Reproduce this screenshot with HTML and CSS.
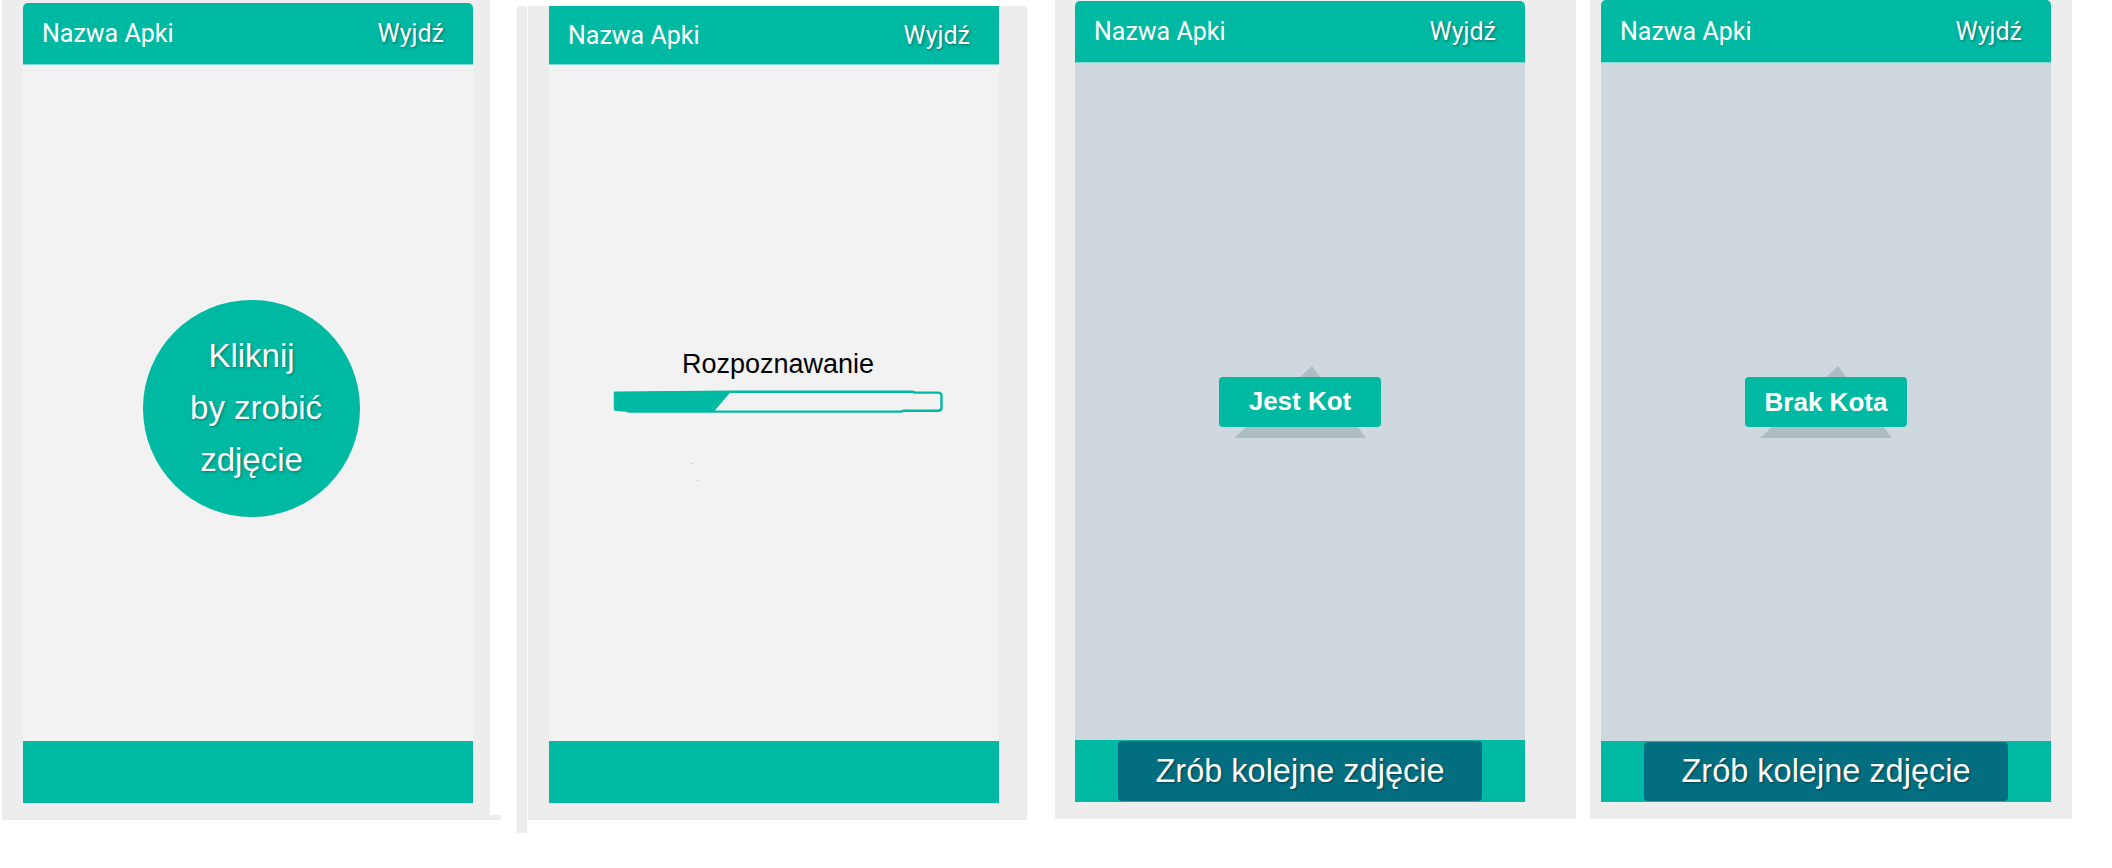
FILE: index.html
```html
<!DOCTYPE html>
<html lang="pl">
<head>
<meta charset="utf-8">
<title>Nazwa Apki – ekrany</title>
<link rel="stylesheet" href="styles.css">
</head>
<body>
<div class="stage">

  <section class="frame f1">
    <div class="phone">
      <header class="bar"><span class="title">Nazwa Apki</span><span class="exit">Wyjdź</span></header>
      <main class="screen">
        <button class="shot" type="button">
          <span class="shot-line">Kliknij</span>
          <span class="shot-line">&nbsp;by zrobić</span>
          <span class="shot-line">zdjęcie</span>
        </button>
      </main>
      <footer class="foot"></footer>
    </div>
  </section>

  <div class="strip"></div>

  <section class="frame f2">
    <div class="phone">
      <header class="bar bar--square"><span class="title">Nazwa Apki</span><span class="exit">Wyjdź</span></header>
      <main class="screen">
        <div class="progress">
          <div class="progress-label">Rozpoznawanie</div>
          <svg class="progress-bar" width="330" height="23" viewBox="0 0 330 23">
            <path d="M1 3 L33 2.5 L36 1.5 L118 1.5 L101 21.5 L18 21.5 L15 20.5 L1 20.5 Z" fill="#00b9a3"/>
            <path d="M2 2.8 L120 1.8 L300 1.8 L302 2.6 L325 2.6 Q328.5 2.6 328.5 6 L328.5 17.5 Q328.5 20.8 325 20.8 L290 20.8 L288 21.6 L16 21.6 L14 20.6 Q2 20.6 2 18 Z" fill="none" stroke="#00b9a3" stroke-width="2.4" stroke-linejoin="round"/>
          </svg>
        </div>
        <span class="dot dot-a"></span>
        <span class="dot dot-b"></span>
      </main>
      <footer class="foot"></footer>
    </div>
  </section>

  <section class="frame f3">
    <div class="phone">
      <header class="bar"><span class="title">Nazwa Apki</span><span class="exit">Wyjdź</span></header>
      <main class="screen screen--result">
        <div class="verdict">
          <svg class="verdict-tri" width="132" height="72" viewBox="0 0 132 72"><polygon points="78,0 132,72 0,72" fill="#aebcc4"/></svg>
          <div class="verdict-box">Jest Kot</div>
        </div>
      </main>
      <footer class="foot foot--action"><button class="again" type="button">Zrób kolejne zdjęcie</button></footer>
    </div>
  </section>

  <section class="frame f4">
    <div class="phone">
      <header class="bar"><span class="title">Nazwa Apki</span><span class="exit">Wyjdź</span></header>
      <main class="screen screen--result">
        <div class="verdict">
          <svg class="verdict-tri" width="132" height="72" viewBox="0 0 132 72"><polygon points="78,0 132,72 0,72" fill="#aebcc4"/></svg>
          <div class="verdict-box">Brak Kota</div>
        </div>
      </main>
      <footer class="foot foot--action"><button class="again" type="button">Zrób kolejne zdjęcie</button></footer>
    </div>
  </section>

</div>
</body>
</html>
```

FILE: styles.css
```css
html, body {
  margin: 0;
  padding: 0;
  background: #ffffff;
}

.stage {
  display: flex;
  align-items: flex-start;
  width: 2112px;
  height: 868px;
  overflow: hidden;
}

.frame {
  position: relative;
  flex: none;
  box-sizing: border-box;
  background: #ededed;
}

.f1 {
  margin-left: 2px;
  width: 488px;
  height: 820px;
  padding: 3px 0 0 21px;
}

.f1::after {
  content: "";
  position: absolute;
  left: 100%;
  bottom: 0;
  width: 11px;
  height: 5px;
  background: #ededed;
}

.strip {
  flex: none;
  margin-left: 27px;
  margin-top: 6px;
  width: 10px;
  height: 827px;
  background: #ededed;
}

.f2 {
  margin-left: 1px;
  margin-top: 6px;
  width: 499px;
  height: 814px;
  padding: 0 0 0 21px;
}

.f3 {
  margin-left: 28px;
  width: 521px;
  height: 819px;
  padding: 1px 0 0 20px;
}

.f4 {
  margin-left: 14px;
  width: 482px;
  height: 819px;
  padding: 0 0 0 11px;
}

.phone {
  width: 450px;
  display: flex;
  flex-direction: column;
}

.f1 .phone { height: 800px; }
.f2 .phone { height: 797px; }
.f3 .phone { height: 801px; }
.f4 .phone { height: 802px; }

.bar {
  flex: none;
  height: 62px;
  box-sizing: border-box;
  display: flex;
  align-items: center;
  justify-content: space-between;
  padding: 0 29px 0 19px;
  background: #00b9a3;
  border-bottom: 1px solid #7fdbcf;
  border-radius: 5px 5px 0 0;
  color: #ffffff;
  font-family: Roboto, "Noto Sans", sans-serif;
  font-size: 25px;
}

.bar--square {
  border-radius: 0;
  height: 59px;
}

.f4 .bar { height: 63px; }

.exit {
  text-shadow: 1px 1px 3px rgba(0, 0, 0, 0.4);
}

.screen {
  position: relative;
  flex: 1;
  display: flex;
  align-items: center;
  justify-content: center;
  background: #f2f2f2;
}

.screen--result {
  background: #d0d8df;
}

.foot {
  flex: none;
  height: 62px;
  box-sizing: border-box;
  background: #00b9a3;
}

.f4 .foot { height: 61px; }

.foot--action {
  display: flex;
  padding: 1px 43px;
}

/* Screen 1: shutter circle */
.shot {
  width: 217px;
  height: 217px;
  margin: 10px 0 0 7px;
  padding: 0;
  border: 0;
  border-radius: 50%;
  background: #00b9a3;
  display: flex;
  flex-direction: column;
  align-items: center;
  justify-content: center;
  color: #ffffff;
  font-family: "Liberation Sans", Arial, sans-serif;
  font-size: 33px;
  line-height: 52px;
  text-shadow: 1px 1px 3px rgba(0, 0, 0, 0.35);
}

.shot-line {
  display: block;
  white-space: pre;
}

/* Screen 2: progress */
.progress {
  display: flex;
  flex-direction: column;
  align-items: center;
  margin: 0 0 45px 8px;
}

.progress-label {
  font-family: "Liberation Sans", Arial, sans-serif;
  font-size: 27px;
  line-height: 31px;
  color: #000000;
}

.progress-bar {
  display: block;
  margin-top: 10px;
}

.dot {
  position: absolute;
  width: 1px;
  height: 1px;
  background: #6fcabe;
}

.dot-a { left: 142px; top: 398px; }
.dot-b { left: 148px; top: 415px; }

/* Screens 3/4: verdict bubble */
.verdict {
  position: relative;
  width: 162px;
  height: 50px;
}

.verdict-tri {
  position: absolute;
  left: 15px;
  top: -11px;
}

.verdict-box {
  position: relative;
  height: 50px;
  display: flex;
  align-items: center;
  justify-content: center;
  background: #00b9a3;
  border-radius: 4px;
  color: #ffffff;
  font-family: "Liberation Sans", Arial, sans-serif;
  font-weight: bold;
  font-size: 26px;
}

.again {
  flex: 1;
  border: 0;
  padding: 0;
  border-radius: 4px;
  background: #036e80;
  color: #ffffff;
  font-family: "Liberation Sans", Arial, sans-serif;
  font-size: 32.5px;
  text-shadow: 1px 1px 2px rgba(0, 0, 0, 0.45);
}
```
